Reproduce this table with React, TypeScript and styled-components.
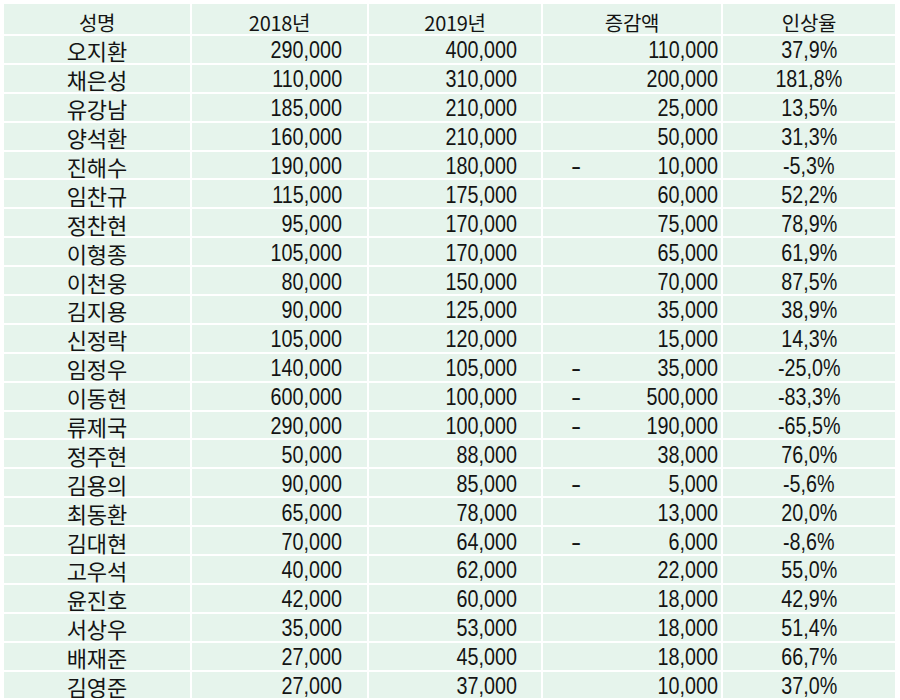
import React from "react";
import styled, { createGlobalStyle } from "styled-components";

const GlobalStyle = createGlobalStyle`
  html, body { margin: 0; padding: 0; background: #ffffff; }
  body { font-family: "Noto Sans CJK KR", "Liberation Sans", sans-serif; color: #141414; }
`;

const Sheet = styled.div`
  padding: 4px 5px 0 4px;
  background: #ffffff;
`;

const Grid = styled.div`
  display: grid;
  grid-template-columns: 186px 175px 172px 178px 172px;
  grid-template-rows: 30px;
  grid-auto-rows: 26.9px;
  column-gap: 2px;
  row-gap: 2px;
`;

type Align = "left" | "center" | "right" | "split";

const Cell = styled.div<{ $align: Align; $padRight?: number; $padLeft?: number }>`
  background: #e6f4ec;
  display: flex;
  align-items: flex-end;
  justify-content: ${(p) =>
    p.$align === "center"
      ? "center"
      : p.$align === "right"
      ? "flex-end"
      : p.$align === "split"
      ? "space-between"
      : "flex-start"};
  padding-right: ${(p) => p.$padRight ?? 0}px;
  padding-left: ${(p) => p.$padLeft ?? 0}px;
`;

const HeadCell = styled(Cell)`
  padding-bottom: 1px;
`;

const NameCell = styled(Cell)`
  padding-bottom: 1.5px;
`;

const HeadText = styled.span`
  font-family: "Noto Sans CJK KR", "Liberation Sans", sans-serif;
  font-size: 20px;
  line-height: 1;
  letter-spacing: -0.3px;
`;

const NameText = styled.span`
  font-family: "Noto Sans CJK KR", sans-serif;
  font-size: 22px;
  line-height: 1;
  white-space: nowrap;
`;

const Num = styled.span<{ $origin: "right" | "center" | "left" }>`
  display: inline-block;
  font-family: "Liberation Sans", Arial, sans-serif;
  font-size: 23.5px;
  line-height: 1;
  transform: scaleX(0.84);
  transform-origin: ${(p) => p.$origin} bottom;
  white-space: nowrap;
`;

const Dash = styled(Num)`
  transform: scaleX(1.3);
`;

type Row = [string, string, string, string, string];

const rows: Row[] = [
  ["오지환", "290,000", "400,000", "110,000", "37,9%"],
  ["채은성", "110,000", "310,000", "200,000", "181,8%"],
  ["유강남", "185,000", "210,000", "25,000", "13,5%"],
  ["양석환", "160,000", "210,000", "50,000", "31,3%"],
  ["진해수", "190,000", "180,000", "-10,000", "-5,3%"],
  ["임찬규", "115,000", "175,000", "60,000", "52,2%"],
  ["정찬현", "95,000", "170,000", "75,000", "78,9%"],
  ["이형종", "105,000", "170,000", "65,000", "61,9%"],
  ["이천웅", "80,000", "150,000", "70,000", "87,5%"],
  ["김지용", "90,000", "125,000", "35,000", "38,9%"],
  ["신정락", "105,000", "120,000", "15,000", "14,3%"],
  ["임정우", "140,000", "105,000", "-35,000", "-25,0%"],
  ["이동현", "600,000", "100,000", "-500,000", "-83,3%"],
  ["류제국", "290,000", "100,000", "-190,000", "-65,5%"],
  ["정주현", "50,000", "88,000", "38,000", "76,0%"],
  ["김용의", "90,000", "85,000", "-5,000", "-5,6%"],
  ["최동환", "65,000", "78,000", "13,000", "20,0%"],
  ["김대현", "70,000", "64,000", "-6,000", "-8,6%"],
  ["고우석", "40,000", "62,000", "22,000", "55,0%"],
  ["윤진호", "42,000", "60,000", "18,000", "42,9%"],
  ["서상우", "35,000", "53,000", "18,000", "51,4%"],
  ["배재준", "27,000", "45,000", "18,000", "66,7%"],
  ["김영준", "27,000", "37,000", "10,000", "37,0%"],
];

const headers = ["성명", "2018년", "2019년", "증감액", "인상율"];

export default function App() {
  return (
    <>
      <GlobalStyle />
      <Sheet>
        <Grid>
          {headers.map((h) => (
            <HeadCell key={h} $align="center">
              <HeadText>{h}</HeadText>
            </HeadCell>
          ))}
          {rows.map(([name, y18, y19, diff, rate]) => {
            const neg = diff.startsWith("-");
            const amount = neg ? diff.slice(1) : diff;
            return (
              <React.Fragment key={name}>
                <NameCell $align="center">
                  <NameText>{name}</NameText>
                </NameCell>
                <Cell $align="right" $padRight={25}>
                  <Num $origin="right">{y18}</Num>
                </Cell>
                <Cell $align="right" $padRight={24}>
                  <Num $origin="right">{y19}</Num>
                </Cell>
                <Cell $align="split" $padLeft={28} $padRight={3}>
                  {neg ? <Dash $origin="left">-</Dash> : <span />}
                  <Num $origin="right">{amount}</Num>
                </Cell>
                <Cell $align="center">
                  <Num $origin="center">{rate}</Num>
                </Cell>
              </React.Fragment>
            );
          })}
        </Grid>
      </Sheet>
    </>
  );
}
